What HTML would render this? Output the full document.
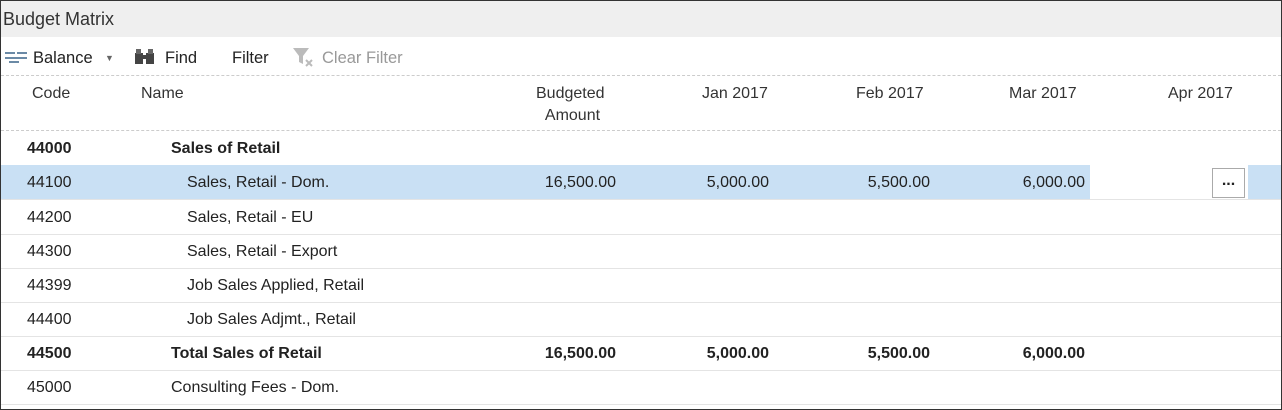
<!DOCTYPE html>
<html><head><style>
body{margin:0;width:1282px;height:410px;overflow:hidden;background:#fff;font-family:"Liberation Sans",sans-serif;color:#222;position:relative}
.frame{position:absolute;left:0;top:0;width:1280px;height:408px;border:1px solid #333;}
.title{position:absolute;left:1px;top:1px;width:1280px;height:36px;background:#efefef;font-size:18px;line-height:36px;padding-left:2px;color:#333}
.tb{position:absolute;top:37px;left:1px;width:1280px;height:38px;border-bottom:1px dashed #ccc;font-size:16.5px;line-height:42px}
.tb span{position:absolute}
.tb span.i{line-height:0}
.h{position:absolute;font-size:16px;color:#333}
.row{position:absolute;left:1px;width:1280px;height:34px;border-bottom:1px solid #e4e4e4;font-size:16px;line-height:35px}
.row span{position:absolute}
.r{text-align:right}
b{font-weight:bold}
</style></head><body>
<div class="title">Budget Matrix</div>
<div class="tb">
<span class="i" style="left:3px;top:14px">
<svg width="26" height="14"><rect x="1" y="1" width="10" height="2" fill="#6b8aa6"/><rect x="13" y="1" width="10" height="2" fill="#6b8aa6"/><rect x="1" y="6" width="22" height="2" fill="#6b8aa6"/><rect x="5" y="10" width="10" height="2" fill="#6b8aa6"/></svg></span>
<span style="left:32px">Balance</span><span style="left:104px;font-size:9px;color:#666">▼</span>
<span class="i" style="left:133px;top:12px"><svg width="22" height="16"><rect x="1" y="4" width="8" height="11" fill="#444"/><rect x="12" y="4" width="8" height="11" fill="#444"/><rect x="8" y="6" width="5" height="4" fill="#444"/><rect x="2" y="0" width="5" height="5" fill="#666"/><rect x="14" y="0" width="5" height="5" fill="#666"/></svg></span>
<span style="left:164px">Find</span>
<span style="left:231px">Filter</span>
<span class="i" style="left:291px;top:9px"><svg width="24" height="22"><path d="M1 2h16l-6 8v8l-4-2v-6z" fill="#bbb"/><path d="M14 14l6 6M20 14l-6 6" stroke="#bbb" stroke-width="2"/></svg></span>
<span style="left:321px;color:#999">Clear Filter</span>
</div>
<div class="h" style="left:32px;top:85px">Code</div>
<div class="h" style="left:141px;top:85px">Name</div>
<div class="h" style="left:536px;top:83px;text-align:center;line-height:22px">Budgeted<br>&nbsp;Amount</div>
<div class="h" style="left:702px;top:85px">Jan 2017</div>
<div class="h" style="left:856px;top:85px">Feb 2017</div>
<div class="h" style="left:1009px;top:85px">Mar 2017</div>
<div class="h" style="left:1168px;top:85px">Apr 2017</div>
<div style="position:absolute;left:1px;top:130px;width:1280px;border-top:1px dashed #ccc"></div>

<div class="row" style="top:131px"><span style="left:26px"><b>44000</b></span><span style="left:170px"><b>Sales of Retail</b></span></div>
<div class="row" style="top:165px;background:linear-gradient(to right,#c9e0f4 0,#c9e0f4 1089px,#fff 1089px,#fff 1247px,#c9e0f4 1247px)"><span style="left:26px">44100</span><span style="left:186px">Sales, Retail - Dom.</span>
<span class="r" style="right:665px">16,500.00</span><span class="r" style="right:512px">5,000.00</span><span class="r" style="right:351px">5,500.00</span><span class="r" style="right:196px">6,000.00</span>
<span style="left:1211px;top:3px;width:31px;height:28px;border:1px solid #aaa;background:#fff;line-height:24px;text-align:center;font-weight:bold">...</span></div>
<div class="row" style="top:200px"><span style="left:26px">44200</span><span style="left:186px">Sales, Retail - EU</span></div>
<div class="row" style="top:234px"><span style="left:26px">44300</span><span style="left:186px">Sales, Retail - Export</span></div>
<div class="row" style="top:268px"><span style="left:26px">44399</span><span style="left:186px">Job Sales Applied, Retail</span></div>
<div class="row" style="top:302px"><span style="left:26px">44400</span><span style="left:186px">Job Sales Adjmt., Retail</span></div>
<div class="row" style="top:336px"><span style="left:26px"><b>44500</b></span><span style="left:170px"><b>Total Sales of Retail</b></span>
<span class="r" style="right:665px"><b>16,500.00</b></span><span class="r" style="right:512px"><b>5,000.00</b></span><span class="r" style="right:351px"><b>5,500.00</b></span><span class="r" style="right:196px"><b>6,000.00</b></span></div>
<div class="row" style="top:370px"><span style="left:26px">45000</span><span style="left:170px">Consulting Fees - Dom.</span></div>
<div class="frame"></div>
</body></html>
